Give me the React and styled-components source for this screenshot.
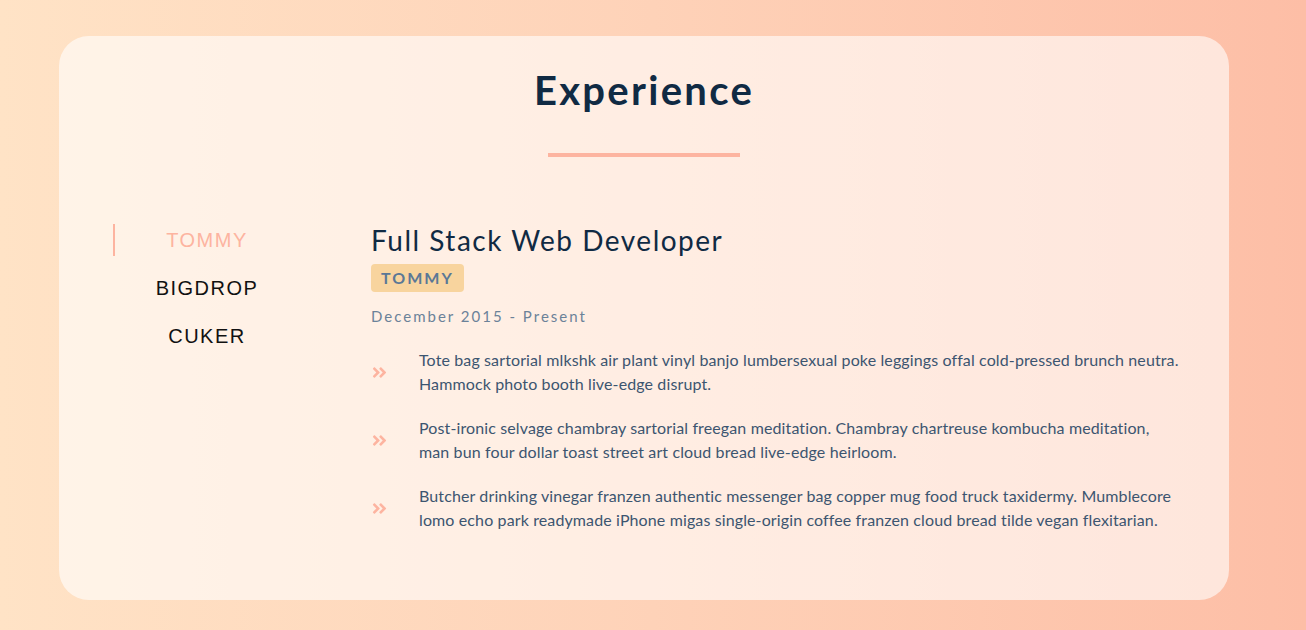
import React, { useState } from 'react'
import styled, { createGlobalStyle } from 'styled-components'
import { FaAngleDoubleRight } from 'react-icons/fa'

const GlobalStyle = createGlobalStyle`
  html, body {
    margin: 0;
    padding: 0;
  }
  body {
    font-family: Lato, "Open Sans", sans-serif;
    background: linear-gradient(90deg, #ffe3c6 0%, #fed2b8 50%, #fdbea6 100%);
    min-height: 630px;
  }
`

const StyledPage = styled.div`
  height: 630px;
  box-sizing: border-box;
  padding: 36px 0 30px 59px;
`

const StyledCard = styled.section`
  width: 1170px;
  height: 564px;
  box-sizing: border-box;
  border-radius: 30px;
  background: rgba(255, 255, 255, 0.6);
  padding: 30px 48px 0;
`

const StyledTitle = styled.h2`
  margin: 0;
  text-align: center;
  font-size: 40px;
  line-height: 48px;
  font-weight: 700;
  letter-spacing: 2.3px;
  color: #102a43;
`

const StyledUnderline = styled.div`
  width: 192px;
  height: 4px;
  margin: 39px auto 0;
  background: #fdb4a0;
`

const StyledBody = styled.div`
  display: flex;
  margin-top: 67px;
  padding-left: 6px;
`

const StyledTabs = styled.div`
  width: 186px;
  margin-right: 72px;
  display: flex;
  flex-direction: column;
  gap: 16px;
`

const StyledTab = styled.button`
  height: 32px;
  border: none;
  border-left: 2px solid ${props => props.active ? '#fdb4a0' : 'transparent'};
  background: transparent;
  padding: 0;
  font-family: "Liberation Sans", Arial, sans-serif;
  font-size: 20px;
  letter-spacing: 1.5px;
  color: ${props => props.active ? '#fdb4a0' : '#111'};
  cursor: pointer;
  text-align: center;
`

const StyledJob = styled.article`
  flex: 1;
`

const StyledJobTitle = styled.h3`
  margin: 0;
  font-size: 28px;
  line-height: 32px;
  font-weight: 400;
  letter-spacing: 1.5px;
  color: #102a43;
`

const StyledBadge = styled.span`
  display: inline-block;
  margin-top: 8px;
  padding: 0 10px;
  height: 28px;
  line-height: 28px;
  border-radius: 4px;
  background: #f8d49e;
  color: #5b7896;
  font-size: 16px;
  font-weight: 700;
  letter-spacing: 2px;
`

const StyledDate = styled.p`
  margin: 14px 0 0;
  font-size: 15px;
  line-height: 20px;
  letter-spacing: 2px;
  color: #6b8299;
`

const StyledDuties = styled.ul`
  list-style: none;
  margin: 22px 0 0;
  padding: 0;
`

const StyledDuty = styled.li`
  display: flex;
  align-items: center;
  margin-bottom: 20px;
`

const StyledIcon = styled.span`
  width: 48px;
  flex-shrink: 0;
  display: flex;
  color: #fdb4a0;
  font-size: 17px;
`

const StyledDutyText = styled.p`
  margin: 0;
  font-size: 16px;
  line-height: 24px;
  letter-spacing: 0.12px;
  color: #3c5570;
`

const JOBS = [
  {
    company: 'TOMMY',
    title: 'Full Stack Web Developer',
    dates: 'December 2015 - Present',
    duties: [
      'Tote bag sartorial mlkshk air plant vinyl banjo lumbersexual poke leggings offal cold-pressed brunch neutra. Hammock photo booth live-edge disrupt.',
      'Post-ironic selvage chambray sartorial freegan meditation. Chambray chartreuse kombucha meditation, man bun four dollar toast street art cloud bread live-edge heirloom.',
      'Butcher drinking vinegar franzen authentic messenger bag copper mug food truck taxidermy. Mumblecore lomo echo park readymade iPhone migas single-origin coffee franzen cloud bread tilde vegan flexitarian.',
    ],
  },
  {
    company: 'BIGDROP',
    title: 'Front-End Engineer',
    dates: 'May 2015 - December 2015',
    duties: [
      'Hashtag drinking vinegar scenester mumblecore snackwave four dollar toast, lumbersexual XOXO. Cardigan church-key pabst, biodiesel vexillologist viral squid.',
      'Franzen af pitchfork, mumblecore try-hard kogi XOXO roof party la croix cardigan neutra retro tattooed copper mug.',
    ],
  },
  {
    company: 'CUKER',
    title: 'Engineering Intern',
    dates: 'May 2014 - September 2015',
    duties: [
      'I\'m baby woke mlkshk wolf bitters live-edge blue bottle, hammock freegan copper mug whatever cold-pressed.',
      'Lo-fi you probably haven\'t heard of them etsy leggings raclette kickstarter four dollar toast.',
    ],
  },
]

const App = () => {
  const [ value, setValue ] = useState(0)
  const job = JOBS[value]

  return (
    <>
      <GlobalStyle />
      <StyledPage>
        <StyledCard>
          <StyledTitle>Experience</StyledTitle>
          <StyledUnderline />
          <StyledBody>
            <StyledTabs>
              {JOBS.map((item, index) =>
                <StyledTab key={item.company} active={index === value} onClick={() => setValue(index)}>
                  {item.company}
                </StyledTab>
              )}
            </StyledTabs>
            <StyledJob>
              <StyledJobTitle>{job.title}</StyledJobTitle>
              <StyledBadge>{job.company}</StyledBadge>
              <StyledDate>{job.dates}</StyledDate>
              <StyledDuties>
                {job.duties.map(duty =>
                  <StyledDuty key={duty}>
                    <StyledIcon><FaAngleDoubleRight /></StyledIcon>
                    <StyledDutyText>{duty}</StyledDutyText>
                  </StyledDuty>
                )}
              </StyledDuties>
            </StyledJob>
          </StyledBody>
        </StyledCard>
      </StyledPage>
    </>
  )
}

export default App
